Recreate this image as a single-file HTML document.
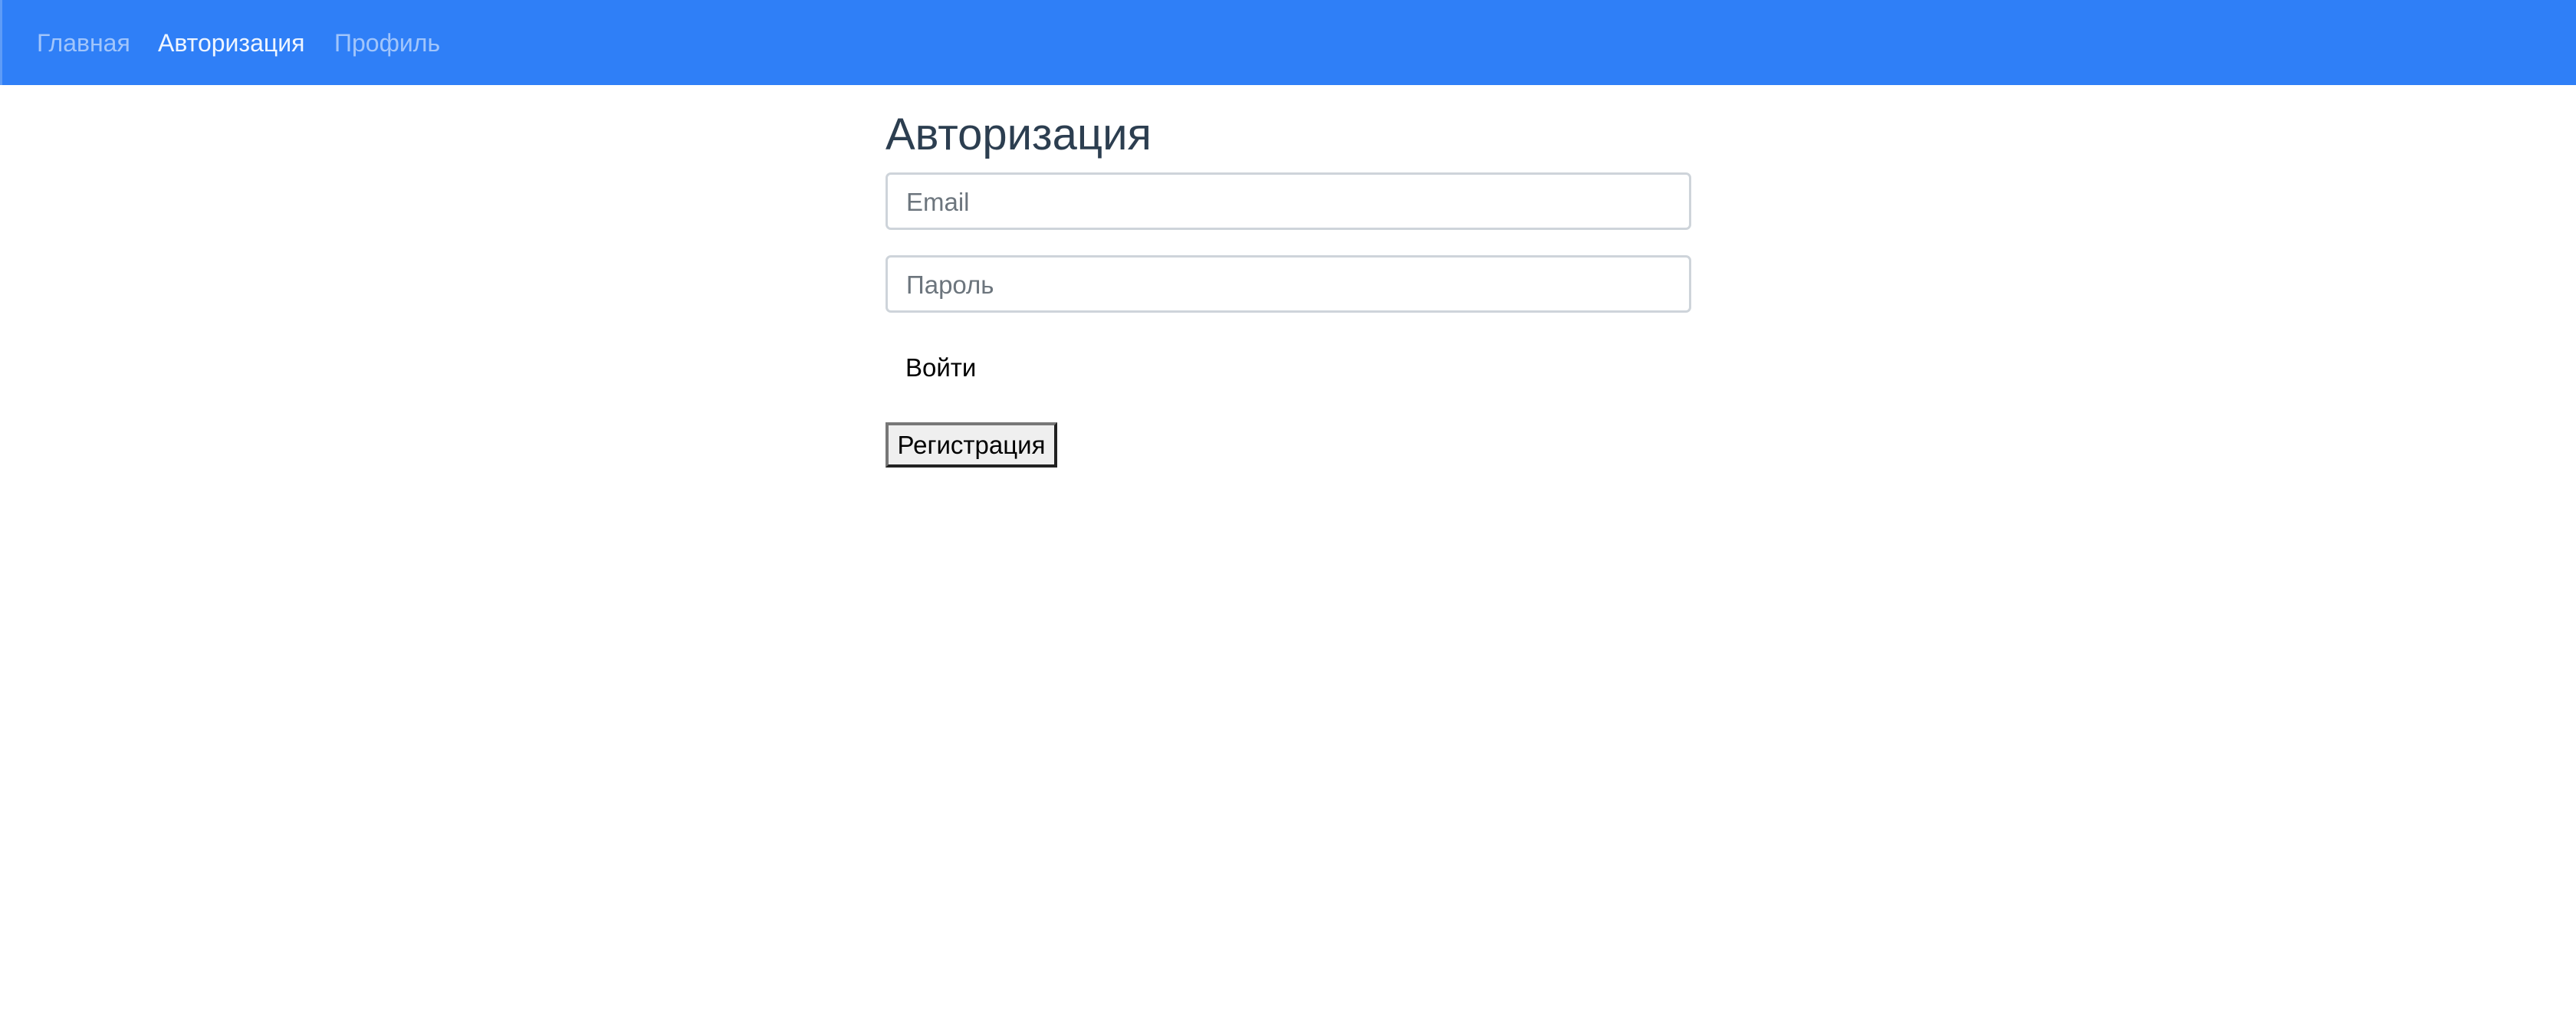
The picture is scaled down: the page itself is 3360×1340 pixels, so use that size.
<!DOCTYPE html>
<html><head><meta charset="utf-8"><style>
html,body{margin:0;padding:0;background:#fff;width:3360px;height:1340px;overflow:hidden;font-family:"Liberation Sans",sans-serif}
nav{position:absolute;left:0;top:0;width:3360px;height:111px;background:#2f7ff7;border-left:3px solid #5e9cf7;box-sizing:border-box}
nav span{position:absolute;top:36px;font-size:32px;line-height:40px;color:rgba(255,255,255,.55)}
nav span.a{color:rgba(255,255,255,.92)}
h1{position:absolute;left:1155px;top:141px;margin:0;font-weight:normal;font-size:58px;line-height:70px;color:#2c3e50}
.in{position:absolute;left:1155px;width:1051px;height:75px;border:3px solid #ced4da;border-radius:7px;box-sizing:border-box;color:#6c757d;font-size:33px;line-height:71px;padding-left:24px}
.b{position:absolute;left:1181px;top:460px;font-size:33px;line-height:40px;color:#000}
.r{position:absolute;left:1155px;top:551px;width:224px;height:59px;box-sizing:border-box;background:#efefef;border:4px solid;border-color:#777 #222 #222 #777;font-size:33px;line-height:51px;text-align:center;color:#000}
</style></head><body>
<nav><span style="left:45px">Главная</span><span class="a" style="left:203px">Авторизация</span><span style="left:433px">Профиль</span></nav>
<h1>Авторизация</h1>
<div class="in" style="top:225px">Email</div>
<div class="in" style="top:333px">Пароль</div>
<div class="b">Войти</div>
<div class="r">Регистрация</div>
</body></html>
